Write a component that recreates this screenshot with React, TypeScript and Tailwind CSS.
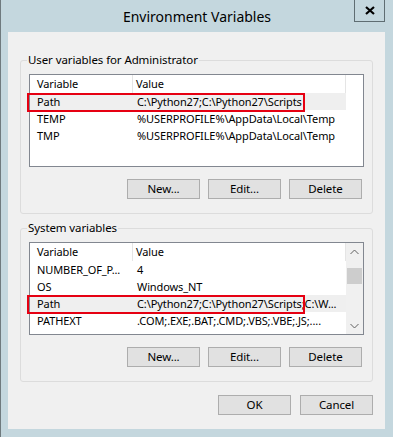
type Row = { name: string; value: string; marked?: boolean }

const userRows: Row[] = [
  { name: "Path", value: "C:\\Python27;C:\\Python27\\Scripts", marked: true },
  { name: "TEMP", value: "%USERPROFILE%\\AppData\\Local\\Temp" },
  { name: "TMP", value: "%USERPROFILE%\\AppData\\Local\\Temp" },
]

const systemRows: Row[] = [
  { name: "NUMBER_OF_P...", value: "4" },
  { name: "OS", value: "Windows_NT" },
  { name: "Path", value: "C:\\Python27;C:\\Python27\\Scripts;C:\\W...", marked: true },
  { name: "PATHEXT", value: ".COM;.EXE;.BAT;.CMD;.VBS;.VBE;.JS;...." },
]

function WinButton({ label }: { label: string }) {
  return (
    <button className="h-[20px] w-[73px] border border-[#adadad] bg-[#e1e1e1] text-[11.5px] leading-[18px] text-black">
      {label}
    </button>
  )
}

function ListView({ rows, scroll }: { rows: Row[]; scroll?: boolean }) {
  return (
    <div className="ml-[8px] mt-[6px] flex h-[93px] w-[335px] border border-[#828790] bg-white">
      <div className="flex w-[316px] flex-col">
        <div className="flex h-[18px] items-center">
          <div className="h-full w-[103px] border-r border-[#e5e5e5] pl-[7px] leading-[18px]">Variable</div>
          <div className="h-full w-[213px] border-r border-[#e5e5e5] pl-[3px] leading-[18px]">Value</div>
        </div>
        {rows.map((r) => (
          <div
            key={r.name}
            className={`relative flex h-[17px] items-center ${r.marked ? "bg-[#efefef]" : ""}`}
          >
            <div className="w-[103px] overflow-hidden whitespace-nowrap pl-[7px] leading-[17px]">{r.name}</div>
            <div className="w-[213px] overflow-hidden whitespace-nowrap pl-[4px] leading-[17px]">{r.value}</div>
            {r.marked && (
              <div className="absolute left-[-3px] top-[0px] h-[19px] w-[278px] border-2 border-[#e60012]" />
            )}
          </div>
        ))}
      </div>
      {scroll ? (
        <div className="flex w-[17px] flex-col items-center bg-[#f0f0f0]">
          <div className="flex h-[17px] items-center justify-center">
            <svg width="9" height="6" viewBox="0 0 9 6">
              <path d="M0.5 5 L4.5 1 L8.5 5" fill="none" stroke="#606060" strokeWidth="1" />
            </svg>
          </div>
          <div className="mt-[8px] h-[16px] w-[15px] bg-[#cdcdcd]" />
          <div className="flex-1" />
          <div className="flex h-[17px] items-center justify-center">
            <svg width="9" height="6" viewBox="0 0 9 6">
              <path d="M0.5 1 L4.5 5 L8.5 1" fill="none" stroke="#606060" strokeWidth="1" />
            </svg>
          </div>
        </div>
      ) : (
        <div className="flex-1" />
      )}
    </div>
  )
}

function Group({ title, rows, scroll, className }: { title: string; rows: Row[]; scroll?: boolean; className?: string }) {
  return (
    <fieldset className={`rounded-[3px] border border-[#dcdcdc] px-0 pb-[14px] ${className ?? ""}`}>
      <legend className="ml-[6px] px-[1px] text-[11.5px] leading-[16px]">{title}</legend>
      <ListView rows={rows} scroll={scroll} />
      <div className="mt-[12px] flex justify-end gap-[8px] pr-[10px]">
        <WinButton label="New..." />
        <WinButton label="Edit..." />
        <WinButton label="Delete" />
      </div>
    </fieldset>
  )
}

export default function App() {
  return (
    <div
      className="relative h-[439px] w-[393px] overflow-hidden bg-white text-[11px] tracking-[-0.1px] text-black"
      style={{ fontFamily: '"Noto Sans", "Segoe UI", sans-serif' }}
    >
      <div className="h-[437px] border-l border-[#6f7a7e] bg-[#c4d7de]">
        <div className="flex h-[32px] items-center justify-center text-[14px] tracking-normal">Environment Variables</div>
        <div className="absolute right-[8px] top-0 flex h-[22px] w-[31px] items-center justify-center border border-t-0 border-[#5f6d72]">
          <svg width="10" height="9" viewBox="0 0 10 9">
            <path d="M1 1 L9 8 M9 1 L1 8" stroke="#000" strokeWidth="2.2" />
          </svg>
        </div>
        <div className="ml-[7px] flex h-[397px] w-[377px] flex-col bg-[#f0f0f0] px-[12px] pt-[20px]">
          <Group title="User variables for Administrator" rows={userRows} />
          <Group title="System variables" rows={systemRows} scroll className="mt-[6px]" />
          <div className="mt-[13px] flex justify-end gap-[9px]">
            <WinButton label="OK" />
            <WinButton label="Cancel" />
          </div>
        </div>
      </div>
    </div>
  )
}
